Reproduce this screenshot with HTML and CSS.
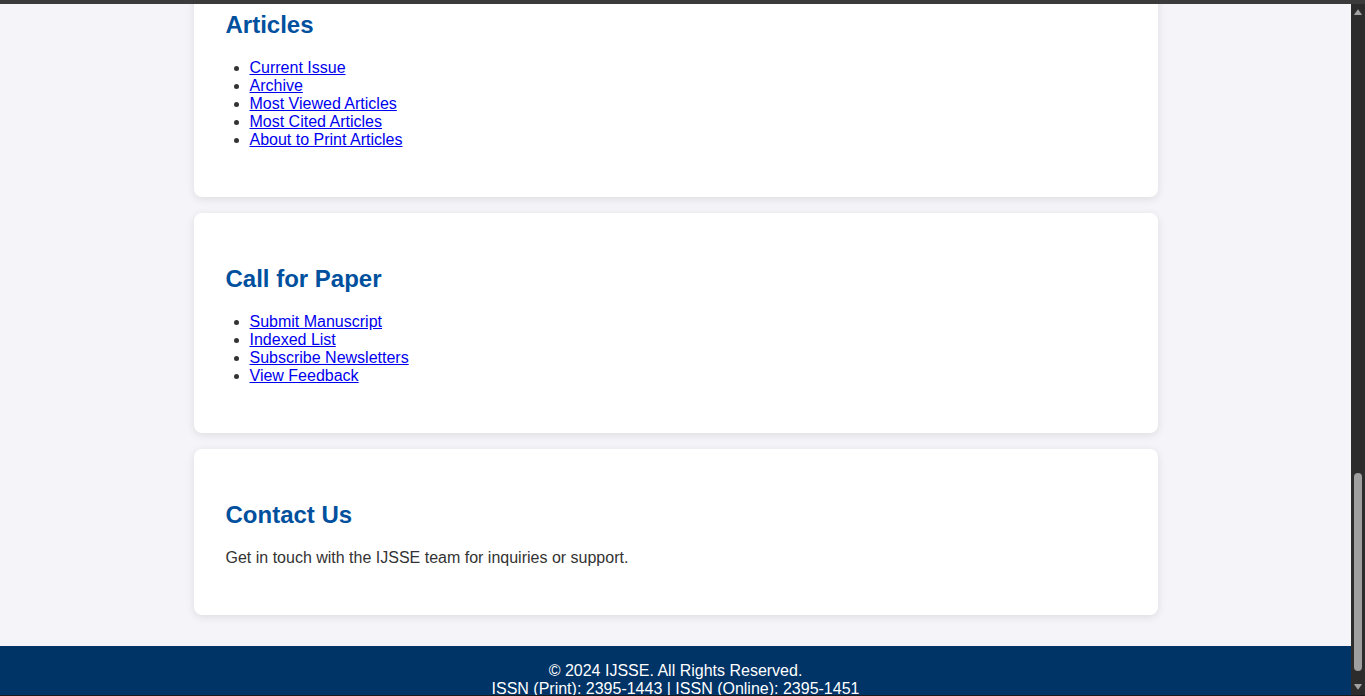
FILE: index.html
```html
<!DOCTYPE html>
<html lang="en">
<head>
<meta charset="utf-8">
<title>IJSSE</title>
<link rel="stylesheet" href="styles.css">
</head>
<body>
<div class="window">
  <div class="viewport">
    <div class="page">
      <div class="earlier"></div>
      <main class="container">
        <section class="card">
          <h2>Articles</h2>
          <ul>
            <li><a href="#">Current Issue</a></li>
            <li><a href="#">Archive</a></li>
            <li><a href="#">Most Viewed Articles</a></li>
            <li><a href="#">Most Cited Articles</a></li>
            <li><a href="#">About to Print Articles</a></li>
          </ul>
        </section>
        <section class="card">
          <h2>Call for Paper</h2>
          <ul>
            <li><a href="#">Submit Manuscript</a></li>
            <li><a href="#">Indexed List</a></li>
            <li><a href="#">Subscribe Newsletters</a></li>
            <li><a href="#">View Feedback</a></li>
          </ul>
        </section>
        <section class="card">
          <h2>Contact Us</h2>
          <p>Get in touch with the IJSSE team for inquiries or support.</p>
        </section>
      </main>
      <footer class="footer">
        <div>&copy; 2024 IJSSE. All Rights Reserved.</div>
        <div>ISSN (Print): 2395-1443 | ISSN (Online): 2395-1451</div>
      </footer>
    </div>
  </div>
  <div class="scrollbar" aria-hidden="true">
    <div class="sb-btn">
      <svg width="8" height="6" viewBox="0 0 8 6"><path d="M4 0.3 L7.8 5.6 Q8 6 7.5 6 L0.5 6 Q0 6 0.2 5.6 Z" fill="#a2a2a2"/></svg>
    </div>
    <div class="sb-track"><div class="sb-thumb"></div></div>
    <div class="sb-btn">
      <svg width="8" height="6" viewBox="0 0 8 6"><path d="M4 5.7 L7.8 0.4 Q8 0 7.5 0 L0.5 0 Q0 0 0.2 0.4 Z" fill="#a2a2a2"/></svg>
    </div>
  </div>
</div>
</body>
</html>
```

FILE: styles.css
```css
html, body {
  margin: 0;
  height: 100%;
  overflow: hidden;
}
body {
  box-sizing: border-box;
  display: flex;
  flex-direction: column;
  border-top: 4px solid #3b3b3b;
  border-bottom: 1px solid #1a1a1a;
  background: #f4f4f9;
  font-family: Arial, "Liberation Sans", sans-serif;
  color: #333;
}
.window {
  flex: 1;
  min-height: 0;
  display: flex;
}
.viewport {
  flex: 1;
  min-width: 0;
  overflow-y: auto;
  display: flex;
  flex-direction: column-reverse;
  background: #f4f4f9;
}
.page {
  flex: none;
}
.earlier {
  height: 1580px;
}
.container {
  width: 964px;
  margin: 0 auto;
  padding-bottom: 15px;
}
.card {
  background: #fff;
  border-radius: 8px;
  padding: 32px;
  margin-bottom: 16px;
  box-shadow: 0 2px 8px rgba(0, 0, 0, 0.1);
}
.card h2 {
  font-size: 24px;
  margin: 0.83em 0;
  color: #00509e;
}
.card ul {
  margin: 16px 0;
  padding-left: 24px;
}
.card p {
  margin: 16px 0;
}
.card a {
  color: #0000ee;
}
.footer {
  box-sizing: border-box;
  height: 49px;
  overflow: hidden;
  padding-top: 16px;
  background: #003366;
  color: #fff;
  text-align: center;
  line-height: 18px;
  font-size: 16px;
}
.scrollbar {
  flex: none;
  width: 14px;
  background: #2c2c2c;
  display: flex;
  flex-direction: column;
}
.sb-btn {
  flex: none;
  height: 16px;
  display: flex;
  align-items: center;
  justify-content: center;
}
.sb-track {
  flex: 1;
  display: flex;
  flex-direction: column;
  align-items: center;
}
.sb-thumb {
  margin-top: auto;
  margin-bottom: 8px;
  width: 8px;
  height: 198px;
  border-radius: 4px;
  background: #9f9f9f;
}
```
